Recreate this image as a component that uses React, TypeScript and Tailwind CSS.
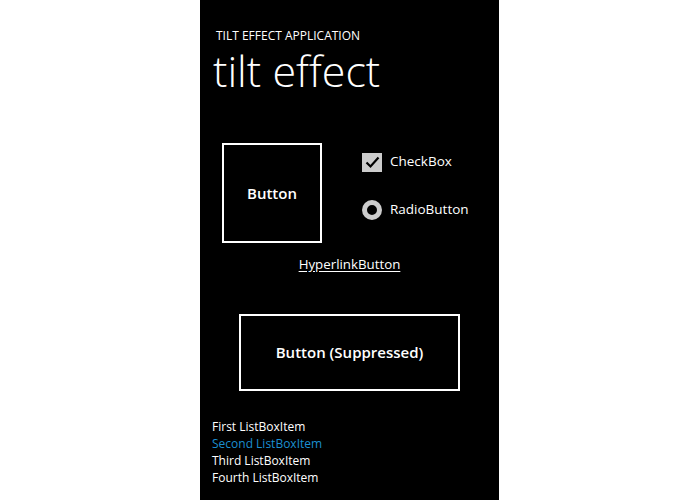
const font = "font-['Open_Sans','Liberation_Sans',sans-serif]";

export default function App() {
  return (
    <div className={`w-[700px] h-[500px] bg-white flex ${font}`}>
      <div className="ml-[200px] w-[299px] h-[500px] bg-black text-white flex flex-col">
        <div className="mt-[30px] pl-[16px] text-[12px] leading-none h-[12px]">TILT EFFECT APPLICATION</div>
        <div className="mt-[7px] pl-[13px] text-[43px] font-light leading-none h-[43px]">tilt effect</div>

        <div className="mt-[51px] flex pl-[22px] h-[100px]">
          <button className="w-[100px] h-[100px] border-2 border-white flex items-center justify-center text-[15px] font-semibold">
            Button
          </button>
          <div className="ml-[40px] flex flex-col">
            <div className="mt-[9px] flex items-center h-[20px]">
              <span className="w-[20px] h-[19px] bg-[#cccccc] flex items-center justify-center">
                <svg width="15" height="13" viewBox="0 0 15 13">
                  <path d="M1.5 6.5 L5.5 10.5 L13.5 1.5" fill="none" stroke="#000" strokeWidth="2.2" />
                </svg>
              </span>
              <span className="ml-[8px] text-[13.5px] leading-none">CheckBox</span>
            </div>
            <div className="mt-[28px] flex items-center h-[20px]">
              <span className="w-[20px] h-[20px] rounded-full border-[5px] border-[#cccccc] bg-black" />
              <span className="ml-[8px] text-[13.5px] leading-none">RadioButton</span>
            </div>
          </div>
        </div>

        <div className="mt-[15px] h-[13px] text-center text-[13.3px] leading-none">
          <span className="underline underline-offset-2">HyperlinkButton</span>
        </div>

        <button className="mt-[43px] mx-auto w-[221px] h-[77px] border-2 border-white flex items-center justify-center text-[15px] font-semibold">
          Button (Suppressed)
        </button>

        <ul className="mt-[27px] pl-[12px] text-[12px] leading-[17px]">
          <li>First ListBoxItem</li>
          <li className="text-[#1b8fd0]">Second ListBoxItem</li>
          <li>Third ListBoxItem</li>
          <li>Fourth ListBoxItem</li>
        </ul>
      </div>
    </div>
  );
}
